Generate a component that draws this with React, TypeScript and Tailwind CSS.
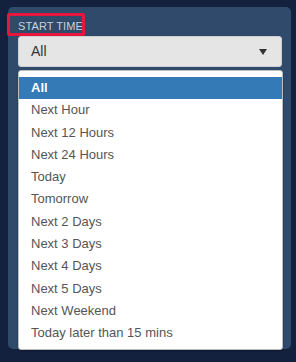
const options = [
  "All",
  "Next Hour",
  "Next 12 Hours",
  "Next 24 Hours",
  "Today",
  "Tomorrow",
  "Next 2 Days",
  "Next 3 Days",
  "Next 4 Days",
  "Next 5 Days",
  "Next Weekend",
  "Today later than 15 mins",
];

export default function App() {
  return (
    <div
      className="w-[296px] h-[362px] bg-[#13213f] pt-[7px] pl-[8px] pr-[5px]"
      style={{ fontFamily: '"Liberation Sans", Arial, sans-serif' }}
    >
      <div className="relative h-[342px] rounded-[5px] bg-[#2f4a6b] px-[10px] pt-[9px]">
        {/* label with highlight box */}
        <div className="absolute left-[-1px] top-[6px] w-[78px] h-[23px] border-[3px] border-[#e5173f] rounded-[2px]" />
        <div className="h-[20px] text-[11px] leading-[20px] text-[#c9d1db] tracking-[0.1px]">
          START TIME
        </div>
        <div className="h-[31px] w-[264px] rounded-[3px] border border-[#cfcfcf] bg-[#e5e5e5] flex items-center justify-between pl-[12px] pr-[14px]">
          <span className="text-[14px] text-[#333]">All</span>
          <svg width="8" height="6" viewBox="0 0 8 6">
            <path d="M0 0 H8 L4 6 Z" fill="#333" />
          </svg>
        </div>
        <div className="mt-[3px] w-[265px] h-[280px] rounded-[3px] border border-[#bdbdbd] bg-white pt-[6px] shadow-[0_1px_2px_rgba(0,0,0,0.3)]">
          {options.map((o, i) => (
            <div
              key={o}
              className={
                i === 0
                  ? "h-[22.3px] leading-[22px] pl-[12px] text-[13px] bg-[#337ab7] text-white font-bold"
                  : "h-[22.3px] leading-[22px] pl-[12px] text-[13px] text-[#555]"
              }
            >
              {o}
            </div>
          ))}
        </div>
      </div>
    </div>
  );
}
